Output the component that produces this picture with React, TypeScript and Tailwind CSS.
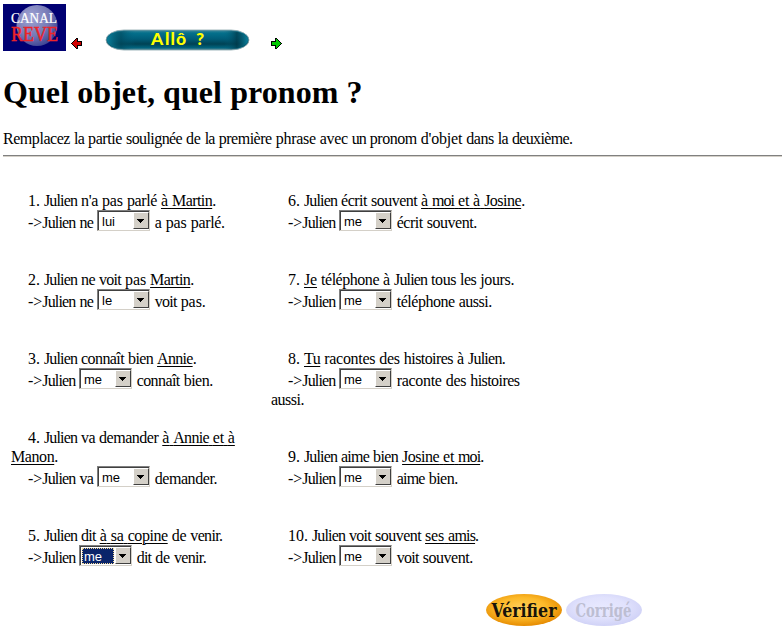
import type { ReactNode } from "react";

type Item = {
  n: number;
  before: string;
  target: string;
  after: string;
  wrapped?: string;
  lead: string;
  value: string;
  tail: string;
  overflow?: string;
  active?: boolean;
};

const left: Item[] = [
  { n: 1, before: "Julien n'a pas parlé ", target: "à Martin", after: ".", lead: "->Julien ne", value: "lui", tail: "a pas parlé." },
  { n: 2, before: "Julien ne voit pas ", target: "Martin", after: ".", lead: "->Julien ne", value: "le", tail: "voit pas." },
  { n: 3, before: "Julien connaît bien ", target: "Annie", after: ".", lead: "->Julien", value: "me", tail: "connaît bien." },
  { n: 4, before: "Julien va demander ", target: "à Annie et à", wrapped: "Manon", after: ".", lead: "->Julien va", value: "me", tail: "demander." },
  { n: 5, before: "Julien dit ", target: "à sa copine", after: " de venir.", lead: "->Julien", value: "me", tail: "dit de venir.", active: true },
];

const right: Item[] = [
  { n: 6, before: "Julien écrit souvent ", target: "à moi et à Josine", after: ".", lead: "->Julien", value: "me", tail: "écrit souvent." },
  { n: 7, before: "", target: "Je", after: " téléphone à Julien tous les jours.", lead: "->Julien", value: "me", tail: "téléphone aussi." },
  { n: 8, before: "", target: "Tu", after: " racontes des histoires à Julien.", lead: "->Julien", value: "me", tail: "raconte des histoires", overflow: "aussi." },
  { n: 9, before: "Julien aime bien ", target: "Josine et moi", after: ".", lead: "->Julien", value: "me", tail: "aime bien." },
  { n: 10, before: "Julien voit souvent ", target: "ses amis", after: ".", lead: "->Julien", value: "me", tail: "voit souvent." },
];

const advanceDelta: Record<string, number> = {
  a: -0.1, à: -0.1, c: -0.1, e: -0.1, é: -0.1, è: -0.1, z: -0.1,
  d: -0.4, u: -1, n: -1, h: -1, v: -1, m: -1.45, x: -1,
  i: -1.44, î: -1.44, l: -1.44, t: -0.44, j: -0.44,
  r: -0.33, s: -0.22, J: -0.22, R: -0.67,
};

function Words({ children }: { children: string }) {
  return (
    <>
      {children.split(/( )/).map((word, i) => {
        if (word === " " || word === "") return word;
        const arrow = word.startsWith("->");
        const body = arrow ? word.slice(2) : word;
        const total = [...body].reduce((sum, c) => sum + (advanceDelta[c] ?? 0), 0);
        return (
          <span key={i}>
            {arrow && "->"}
            <span style={{ letterSpacing: `${(total / body.length).toFixed(3)}px` }}>{body}</span>
          </span>
        );
      })}
    </>
  );
}

function Underlined({ children }: { children: ReactNode }) {
  return <span className="underline decoration-1 underline-offset-[2px]">{children}</span>;
}

function Select({ value, active }: { value: string; active?: boolean }) {
  return (
    <button className="flex h-[21px] w-[53px] shrink-0 border border-t-[#808080] border-l-[#808080] border-r-[#d4d0c8] border-b-[#d4d0c8] font-['Liberation_Sans',sans-serif] text-[13px]">
      <span className="flex h-[19px] w-[51px] border-t border-l border-[#404040]">
        <span
          className={
            active
              ? "m-px h-4 w-8 border border-dotted border-[#f5db95] bg-[#0a246a] pl-px text-left leading-[15px] text-white"
              : "m-px h-4 w-8 pl-0.5 text-left leading-[17px] text-black"
          }
        >
          {value}
        </span>
        <span className="flex h-[17px] w-4 items-center border border-t-white border-l-white border-r-[#404040] border-b-[#404040] bg-[#d4d0c8] pl-[3px]">
          <svg width="7" height="4" viewBox="0 0 7 4" shapeRendering="crispEdges">
            <path d="M0 0h7v1H6v1H5v1H4v1H3V3H2V2H1V1H0z" />
          </svg>
        </span>
      </span>
    </button>
  );
}

function Exercise({ item }: { item: Item }) {
  return (
    <div className="mb-[38px] whitespace-pre leading-[19px]">
      <div className="pl-[17px]">
        {item.n}. <Words>{item.before}</Words>
        <Underlined><Words>{item.target}</Words></Underlined>
        {item.wrapped ? null : <Words>{item.after}</Words>}
      </div>
      {item.wrapped && (
        <div>
          <Underlined><Words>{item.wrapped}</Words></Underlined>
          {item.after}
        </div>
      )}
      <div className="flex h-[22px] pl-[17px]">
        <span className="mr-[3.6px] pt-[3px]"><Words>{item.lead}</Words></span>
        <Select value={item.value} active={item.active} />
        <span className="ml-[4.7px] pt-[3px]"><Words>{item.tail}</Words></span>
      </div>
      {item.overflow && <div><Words>{item.overflow}</Words></div>}
    </div>
  );
}

function Logo() {
  return (
    <svg width="63" height="47" viewBox="0 0 63 47">
      <defs>
        <radialGradient id="globe" cx="0.35" cy="0.3" r="0.75">
          <stop offset="0" stopColor="#a0a4d4" />
          <stop offset="0.6" stopColor="#767ab6" />
          <stop offset="1" stopColor="#3c4494" />
        </radialGradient>
      </defs>
      <rect width="63" height="47" fill="#000072" />
      <circle cx="34" cy="21.5" r="20.5" fill="url(#globe)" />
      <g fontFamily="Liberation Serif, serif">
        <text x="8" y="19" fontSize="14.5" fill="#fff" stroke="#fff" strokeWidth="0.2" textLength="46" lengthAdjust="spacingAndGlyphs">CANAL</text>
        <text x="8" y="36.7" fontSize="21" fill="#ed2428" stroke="#ed2428" strokeWidth="0.5" textLength="47" lengthAdjust="spacingAndGlyphs">REVE</text>
      </g>
    </svg>
  );
}

function Arrow({ color, flip }: { color: string; flip?: boolean }) {
  return (
    <svg width="11" height="11" viewBox="0 0 11 11" shapeRendering="crispEdges" className={flip ? "-scale-x-100" : ""}>
      <path d="M4 0h2v1h1v1h1v1h1v1h1v1h1v1h-1v1H9v1H8v1H7v1H6v1H4V8H0V3h4z" fill="#000" />
      <path d="M5 1v3H1v3h4v3h1V9h1V8h1V7h1V6h1V5H9V4H8V3H7V2H6V1z" fill={color} />
    </svg>
  );
}

function Banner() {
  return (
    <svg width="145" height="23" viewBox="0 0 145 23">
      <defs>
        <linearGradient id="teal" x1="0" y1="0" x2="0" y2="1">
          <stop offset="0" stopColor="#448a9c" />
          <stop offset="0.15" stopColor="#04708c" />
          <stop offset="0.45" stopColor="#005c78" />
          <stop offset="0.7" stopColor="#004254" />
          <stop offset="0.88" stopColor="#00627c" />
          <stop offset="1" stopColor="#558b98" />
        </linearGradient>
        <linearGradient id="ends">
          <stop offset="0" stopColor="#0a809c" />
          <stop offset="0.1" stopColor="#00485c" stopOpacity="0.6" />
          <stop offset="0.2" stopColor="#006480" stopOpacity="0" />
          <stop offset="0.83" stopColor="#006480" stopOpacity="0" />
          <stop offset="0.92" stopColor="#003848" stopOpacity="0.7" />
          <stop offset="1" stopColor="#0a809c" />
        </linearGradient>
      </defs>
      <rect x="1" y="1" width="143" height="20" rx="18" ry="10" fill="url(#teal)" stroke="#8ba6ac" strokeWidth="0.8" />
      <rect x="2" y="2" width="141" height="18" rx="17" ry="9" fill="url(#ends)" />
      <text x="46 60 65.5 71 82 91" y="16" fontFamily="Lato, sans-serif" fontWeight="900" fontSize="17.5" fill="#ffff00">Allô ?</text>
    </svg>
  );
}

function Oval({ label, muted }: { label: string; muted?: boolean }) {
  return (
    <button className="block">
      <svg width="76" height="33" viewBox="0 0 76 33" className="overflow-visible">
        <defs>
          <radialGradient id={muted ? "pale" : "gold"} cx="0.47" cy="0.43" r="0.58">
            <stop offset="0" stopColor={muted ? "#e8e9ff" : "#ffd05a"} />
            <stop offset="0.55" stopColor={muted ? "#e1e2fd" : "#fcb929"} />
            <stop offset="1" stopColor={muted ? "#cfd1f6" : "#e58a00"} />
          </radialGradient>
        </defs>
        <ellipse cx="38" cy="16" rx="38" ry="16" fill={muted ? "url(#pale)" : "url(#gold)"} />
        <text
          x={muted ? 9.5 : 5.5}
          y="22.5"
          fontFamily="DejaVu Serif Condensed, DejaVu Serif, serif"
          fontWeight="700"
          fontSize="19"
          fill={muted ? "#bdbed2" : "#17130a"}
          textLength={muted ? 56 : 65}
          lengthAdjust="spacingAndGlyphs"
        >
          {label}
        </text>
      </svg>
    </button>
  );
}

export default function App() {
  return (
    <main className="h-[629px] w-[782px] overflow-hidden bg-white pl-[3px] pt-1 font-['Liberation_Serif',serif] text-[16px] text-black">
      <header className="flex h-[47px]">
        <Logo />
        <div className="ml-[5px] mt-[34px]"><Arrow color="#d00000" flip /></div>
        <div className="ml-[23px] mt-[25px]"><Banner /></div>
        <div className="ml-[21px] mt-[34px]"><Arrow color="#00c800" /></div>
      </header>
      <h1 className="mt-[23px] h-[37px] text-[32px] font-bold leading-[37px] tracking-[0.08px]">Quel objet, quel pronom ?</h1>
      <p className="mt-[18px] h-[19px] whitespace-pre leading-[19px]">
        <Words>Remplacez la partie soulignée de la première phrase avec un pronom d'objet dans la deuxième.</Words>
      </p>
      <hr className="mt-[7px] h-0.5 border-t border-b border-t-[#808080] border-b-[#d4d0c8]" />
      <section className="mt-[34px] flex h-[403px] pl-2">
        <div className="w-[260px]">{left.map((item) => <Exercise key={item.n} item={item} />)}</div>
        <div className="w-[270px]">{right.map((item) => <Exercise key={item.n} item={item} />)}</div>
      </section>
      <footer className="flex gap-1 pl-[483px]">
        <Oval label="Vérifier" />
        <Oval label="Corrigé" muted />
      </footer>
    </main>
  );
}
